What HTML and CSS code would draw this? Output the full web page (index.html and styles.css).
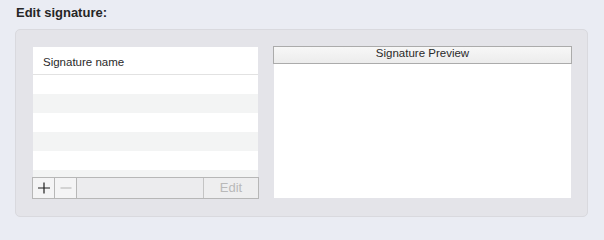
FILE: index.html
```html
<!DOCTYPE html>
<html>
<head>
<meta charset="utf-8">
<link rel="stylesheet" href="styles.css">
</head>
<body>
<h1 class="title">Edit signature:</h1>
<div class="panel">
  <div class="left">
    <div class="list">
      <div class="list-head">Signature name</div>
      <div class="row"></div>
      <div class="row alt"></div>
      <div class="row"></div>
      <div class="row alt"></div>
      <div class="row"></div>
      <div class="row alt short"></div>
    </div>
    <div class="bar">
      <div class="btn plus">
        <svg width="12" height="12" viewBox="0 0 12 12"><path d="M0 6h12M6 0.5v11" stroke="#1e1e1e" stroke-width="1.2" fill="none"/></svg>
      </div>
      <div class="btn minus">
        <svg width="12" height="12" viewBox="0 0 12 12"><path d="M0.5 6h11" stroke="#bdbdbd" stroke-width="1.2" fill="none"/></svg>
      </div>
      <div class="spacer"></div>
      <div class="edit">Edit</div>
    </div>
  </div>
  <div class="right">
    <div class="preview-head">Signature Preview</div>
    <div class="preview-body"></div>
  </div>
</div>
</body>
</html>
```

FILE: styles.css
```css
html, body {
  margin: 0;
  padding: 0;
  background: #eaecf3;
  font-family: "Liberation Sans", Arial, sans-serif;
}
body {
  width: 604px;
  height: 224px;
  overflow: hidden;
}
.title {
  margin: 0;
  padding: 5px 0 0 16px;
  font-size: 13px;
  line-height: 16px;
  font-weight: bold;
  color: #262626;
}
.panel {
  margin: 8px 0 0 15px;
  width: 573px;
  box-sizing: border-box;
  border: 1px solid #d9d9de;
  border-radius: 5px;
  background: #e4e4e9;
  padding: 16px 15px 17px 16px;
  display: flex;
  align-items: flex-start;
  gap: 14px;
}
.left {
  width: 227px;
  display: flex;
  flex-direction: column;
}
.list {
  margin: 1px 1px 0 1px;
  height: 130px;
  background: #ffffff;
  overflow: hidden;
}
.list-head {
  height: 23px;
  padding: 4px 0 0 10px;
  line-height: 23px;
  font-size: 11.5px;
  color: #2a2a2a;
  border-bottom: 1px solid #e2e2e2;
}
.row {
  height: 19px;
  background: #ffffff;
}
.row.alt {
  background: #f3f4f4;
}
.row.short {
  height: 7px;
}
.bar {
  height: 22px;
  box-sizing: border-box;
  border: 1px solid #b7b7b7;
  background: #ececee;
  display: flex;
}
.btn {
  width: 21px;
  border-right: 1px solid #b7b7b7;
  background: #f4f4f5;
  display: flex;
  align-items: center;
  justify-content: center;
}
.btn svg {
  display: block;
}
.spacer {
  flex: 1;
}
.edit {
  width: 54px;
  border-left: 1px solid #c4c4c4;
  background: #eeeeef;
  text-align: center;
  font-size: 13px;
  line-height: 20px;
  color: #b9b9b9;
}
.right {
  width: 299px;
  display: flex;
  flex-direction: column;
  align-items: center;
}
.preview-head {
  width: 299px;
  box-sizing: border-box;
  height: 18px;
  border: 1px solid #ababab;
  background: linear-gradient(#f7f7f7, #ececec);
  text-align: center;
  font-size: 11.5px;
  line-height: 12px;
  padding-bottom: 4px;
  color: #2a2a2a;
}
.preview-body {
  width: 297px;
  height: 134px;
  background: #ffffff;
}
```
